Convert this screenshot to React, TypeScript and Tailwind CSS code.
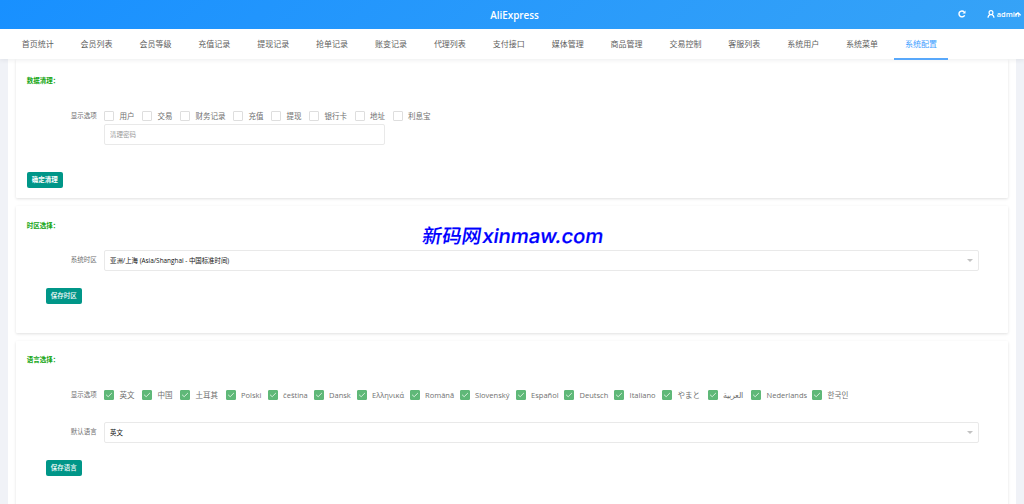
import React from 'react';
import clsx from 'clsx';

interface Option {
  name: string;
  width: string;
}

interface CheckOptionProps {
  option: Option;
  checked?: boolean;
}

const menus = [
  '首页统计', '会员列表', '会员等级', '充值记录', '提现记录', '抢单记录', '账变记录', '代理列表',
  '支付接口', '媒体管理', '商品管理', '交易控制', '客服列表', '系统用户', '系统菜单', '系统配置',
];

const cleanOptions: Option[] = [
  { name: '用户', width: 'w-[38px]' },
  { name: '交易', width: 'w-[38px]' },
  { name: '财务记录', width: 'w-[53px]' },
  { name: '充值', width: 'w-[38px]' },
  { name: '提现', width: 'w-[38px]' },
  { name: '银行卡', width: 'w-[45.5px]' },
  { name: '地址', width: 'w-[38px]' },
  { name: '利息宝', width: 'w-[45px]' },
];

const languages: Option[] = [
  { name: '英文', width: 'w-[38px]' },
  { name: '中国', width: 'w-[38px]' },
  { name: '土耳其', width: 'w-[45.5px]' },
  { name: 'Polski', width: 'w-[42px]' },
  { name: 'čeština', width: 'w-[46px]' },
  { name: 'Dansk', width: 'w-[43px]' },
  { name: 'Ελληνικά', width: 'w-[53px]' },
  { name: 'Română', width: 'w-[50px]' },
  { name: 'Slovenský', width: 'w-[56px]' },
  { name: 'Español', width: 'w-[48.5px]' },
  { name: 'Deutsch', width: 'w-[50px]' },
  { name: 'Italiano', width: 'w-[48px]' },
  { name: 'やまと', width: 'w-[45.5px]' },
  { name: 'العربية', width: 'w-[43.5px]' },
  { name: 'Nederlands', width: 'w-[61px]' },
  { name: '한국인', width: 'w-[46px]' },
];

const CheckOption: React.FC<CheckOptionProps> = ({ option, checked }) => (
  <label className={clsx('flex h-[10px] shrink-0 items-center whitespace-nowrap', option.width)}>
    <span
      className={clsx(
        'mr-[5.5px] flex size-[10px] shrink-0 items-center justify-center rounded-[1px] border',
        checked ? 'border-[#5fb878] bg-[#5fb878]' : 'border-[#dedede] bg-white'
      )}
    >
      {checked && (
        <svg viewBox="0 0 10 10" className="size-[10px] shrink-0" fill="none" stroke="#d5eedb" strokeWidth="1">
          <path d="M2.1 4.8 4.2 6.7 7.9 3" />
        </svg>
      )}
    </span>
    <span className="text-[7.5px] leading-[10px] text-[#707070]">{option.name}</span>
  </label>
);

const CardTitle: React.FC<{ children: React.ReactNode }> = ({ children }) => (
  <h3 className="ml-[11.2px] text-[6.5px] leading-[10px] font-bold text-[#12a512]">{children}</h3>
);

const FieldLabel: React.FC<{ children: React.ReactNode }> = ({ children }) => (
  <span className="mr-[7.4px] w-[81.2px] shrink-0 text-right text-[6.5px] leading-[10px] text-[#707070]">{children}</span>
);

const SelectField: React.FC<{ value: string }> = ({ value }) => (
  <div className="flex h-[21px] w-[874.6px] items-center justify-between rounded-[2px] border border-[#e9e9e9] bg-white px-[5px]">
    <span className="text-[6.4px] text-[#111]">{value}</span>
    <svg viewBox="0 0 6 3" className="h-[3px] w-[6px]" fill="#c2c2c2">
      <path d="M0 0h6L3 3z" />
    </svg>
  </div>
);

const ActionButton: React.FC<{ children: React.ReactNode; className?: string }> = ({ children, className }) => (
  <button
    className={clsx(
      'block h-[16px] w-[36.5px] rounded-[2px] bg-[#009688] text-center text-[6.5px] leading-[16px] font-medium whitespace-nowrap text-white',
      className
    )}
  >
    {children}
  </button>
);

const App: React.FC = () => {
  return (
    <div className="relative flex h-[504px] w-[1024px] flex-col overflow-hidden bg-[#f0f2f7] font-['Open_Sans','Noto_Sans_CJK_SC',sans-serif]">
      <header className="z-20 flex h-[29.4px] shrink-0 items-center bg-linear-135 from-[#1890ff] to-[#36a3f7] text-white">
        <div className="w-[472.5px]" />
        <h1 className="w-[84px] text-center text-[9.9px] leading-[28px] font-semibold">AliExpress</h1>
        <div className="ml-auto flex items-center pr-[3px] pb-px">
          <svg viewBox="0 0 10 10" className="mr-[21px] size-[8px]" fill="none" stroke="currentColor" strokeWidth="1.8">
            <path d="M8.3 6.5A3.7 3.7 0 1 1 7.6 2.3" />
            <path d="M9.4.5v4H5.4z" fill="currentColor" stroke="none" />
          </svg>
          <svg viewBox="0 0 10 10" className="mr-[2px] size-[8px]" fill="none" stroke="currentColor" strokeWidth="1.5">
            <circle cx="5" cy="3.3" r="2.4" />
            <path d="M1.3 9.6C1.4 7.2 2.6 6 4.2 5.7M5.8 5.7C7.6 6 8.6 7.2 8.7 9.6" />
          </svg>
          <span className="text-[7.4px] leading-[10px] font-semibold">admin</span>
          <svg viewBox="0 0 6 4" className="-ml-[4.5px] h-[4px] w-[6px]" fill="none" stroke="currentColor" strokeWidth="1.3">
            <path d="M.4 3.3 3 .8l2.6 2.5" />
          </svg>
        </div>
      </header>

      <nav className="z-10 flex h-[29.6px] shrink-0 gap-[5.4px] bg-white pl-[10.9px] shadow-[0_1px_5px_rgba(0,21,41,0.08)]">
        {menus.map((menu, index) => (
          <a
            key={menu}
            className={clsx(
              'h-[30.6px] w-[53.5px] shrink-0 border-b-2 text-center text-[8px] leading-[29.2px] whitespace-nowrap',
              index === menus.length - 1 ? 'border-[#58a8fb] text-[#409eff]' : 'border-transparent text-[#606060]'
            )}
          >
            {menu}
          </a>
        ))}
      </nav>

      <main className="mx-[8px] flex flex-1 flex-col gap-[8px] bg-white pr-[8px] pl-[7.5px]">
        <section className="h-[139px] shrink-0 rounded-[1px] pt-[17px] shadow-[0_1px_3px_rgba(0,0,0,0.12)]">
          <CardTitle>数据清理：</CardTitle>
          <div className="mt-[24.6px] flex items-center">
            <FieldLabel>显示选项</FieldLabel>
            {cleanOptions.map((option) => (
              <CheckOption key={option.name} option={option} />
            ))}
          </div>
          <input
            className="mt-[3.6px] ml-[88.6px] block h-[21px] w-[280.5px] rounded-[2px] border border-[#e9e9e9] px-[5px] text-[6.5px] placeholder:text-[#999]"
            placeholder="清理密码"
          />
          <ActionButton className="mt-[27px] ml-[11px] font-semibold">确定清理</ActionButton>
        </section>

        <section className="h-[127px] shrink-0 rounded-[1px] pt-[15px] shadow-[0_1px_3px_rgba(0,0,0,0.12)]">
          <CardTitle>时区选择：</CardTitle>
          <div className="mt-[19px] flex items-center">
            <FieldLabel>系统时区</FieldLabel>
            <SelectField value="亚洲/上海 (Asia/Shanghai - 中国标准时间)" />
          </div>
          <ActionButton className="mt-[17px] ml-[30px]">保存时区</ActionButton>
        </section>

        <section className="h-[180px] shrink-0 rounded-[1px] pt-[14px] shadow-[0_1px_3px_rgba(0,0,0,0.12)]">
          <CardTitle>语言选择：</CardTitle>
          <div className="mt-[25px] flex items-center">
            <FieldLabel>显示选项</FieldLabel>
            {languages.map((language) => (
              <CheckOption key={language.name} option={language} checked />
            ))}
          </div>
          <div className="mt-[22px] flex items-center">
            <FieldLabel>默认语言</FieldLabel>
            <SelectField value="英文" />
          </div>
          <ActionButton className="mt-[17px] ml-[30px]">保存语言</ActionButton>
        </section>
      </main>

      {/* Watermark */}
      <svg className="pointer-events-none absolute top-[220px] left-[415px] z-30 h-[34px] w-[200px]" fill="#0000ff">
        <g transform="translate(6.5 23) skewX(-9)">
          <text className="font-['Noto_Sans_CJK_SC',sans-serif] text-[19.5px] font-medium" stroke="#0000ff" strokeWidth="0.1" textLength="59" lengthAdjust="spacingAndGlyphs">
            新码网
          </text>
          <text x="60" className="font-['Inter',sans-serif] text-[19.5px] font-medium" stroke="#0000ff" strokeWidth="0.2" textLength="121" lengthAdjust="spacingAndGlyphs">
            xinmaw.com
          </text>
        </g>
      </svg>
    </div>
  );
};

export default App;
